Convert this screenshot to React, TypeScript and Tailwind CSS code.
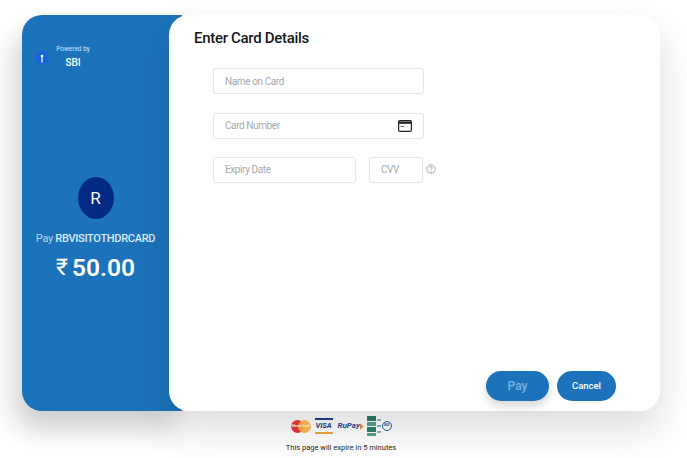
import React from 'react';

const font = 'font-[Roboto,"Noto_Sans",sans-serif]';

const inputClass =
  'h-[26px] rounded-[3px] border border-[#e3e6ea] bg-white px-[11px] text-[10px] tracking-[-0.4px] text-[#8a8f94] placeholder:text-[#a6a9ad] outline-none shadow-[0_0_2px_rgba(0,0,0,0.05)]';

const SbiLogo = () => (
  <svg width="14" height="14" viewBox="0 0 14 14">
    <circle cx="7" cy="7" r="7" fill="#1565d8" />
    <circle cx="7" cy="5" r="1.3" fill="#fff" />
    <rect x="6.4" y="5" width="1.2" height="6.5" fill="#fff" />
  </svg>
);

const CardIcon = () => (
  <svg width="14" height="12" viewBox="0 0 14 12" fill="none">
    <rect x="0.6" y="0.6" width="12.8" height="10.8" rx="1.2" stroke="#222" strokeWidth="1.2" />
    <rect x="0.6" y="1.5" width="12.8" height="2.3" fill="#222" />
    <rect x="2.5" y="6" width="3.5" height="0.9" fill="#555" />
  </svg>
);

const HelpIcon = () => (
  <svg width="10" height="10" viewBox="0 0 10 10" fill="none">
    <circle cx="5" cy="5" r="4.2" stroke="#8f8f8f" strokeWidth="0.8" />
    <path d="M3.7 3.9c0-.8.6-1.3 1.3-1.3s1.3.5 1.3 1.2c0 1-1.3 1-1.3 2" stroke="#8f8f8f" strokeWidth="0.8" />
    <circle cx="5" cy="7.3" r="0.5" fill="#8f8f8f" />
  </svg>
);

const MasterCard = () => (
  <div className="relative h-[15px] w-[20px]">
    <div className="absolute left-0 top-0 h-[13px] w-[13px] translate-y-[1px] rounded-full bg-[#d9313b]" />
    <div className="absolute right-0 top-0 h-[13px] w-[13px] translate-y-[1px] rounded-full bg-[#eba93a] opacity-90" />
    <span className="absolute inset-0 text-center text-[3.5px] font-bold italic leading-[15px] text-[#fbe9d8]">MasterCard</span>
  </div>
);

const Visa = () => (
  <div className="flex h-[16px] w-[18px] flex-col justify-between">
    <div className="h-[2px] bg-[#1b3f8f]" />
    <span className="text-center text-[7.5px] font-bold italic leading-none text-[#1b3f8f]">VISA</span>
    <div className="h-[2px] bg-[#eba93a]" />
  </div>
);

const RuPay = () => (
  <div className="flex w-[26px] items-center">
    <span className="text-[8px] font-bold italic leading-none text-[#2a4a97]">RuPay</span>
    <svg width="4" height="7" viewBox="0 0 4 7">
      <path d="M0 0l4 3.5-4 3.5z" fill="#e8943a" />
    </svg>
  </div>
);

const CertBadges = () => (
  <div className="flex w-[25px] items-center gap-[1px]">
    <div className="flex w-[9px] flex-col gap-[1px]">
      <div className="h-[5px] bg-[#2f7d6b]" />
      <div className="h-[4px] bg-[#5aa08c]" />
      <div className="h-[5px] bg-[#2f7d6b]" />
      <div className="h-[3px] bg-[#5aa08c]" />
    </div>
    <div className="flex w-[4px] flex-col gap-[4px]">
      <div className="h-[2px] bg-[#8fb5ab]" />
      <div className="h-[2px] bg-[#8fb5ab]" />
      <div className="h-[2px] bg-[#8fb5ab]" />
    </div>
    <div className="flex h-[10px] w-[10px] items-center justify-center rounded-full border border-[#2a5fa8] text-[3.5px] font-bold text-[#2a4a97]">ISO</div>
  </div>
);

export default function App() {
  return (
    <div className={`h-[458px] w-[687px] overflow-hidden bg-white ${font}`}>
      <div className="flex pl-[22px] pt-[15px]">
        {/* Merchant panel */}
        <div className="flex h-[396px] w-[160px] flex-col rounded-l-[20px] bg-[#1c73bb] pl-[13px] pr-[26px] pt-[29px] text-white shadow-[-6px_18px_28px_rgba(0,0,0,0.2)]">
          <div className="flex items-center">
            <div className="mt-[2px]">
              <SbiLogo />
            </div>
            <div className="ml-[7px] flex w-[34px] flex-col items-center">
              <span className="whitespace-nowrap text-[6.5px] leading-[10px] text-[#cfe3f5]">Powered by</span>
              <span className="mt-[3px] text-[10px] font-medium leading-[12px]">SBI</span>
            </div>
          </div>
          <div className="-ml-[13px] -mr-[26px] mt-[108px] flex w-[147px] flex-col items-center">
            <div className="flex h-[42px] w-[36px] items-center justify-center rounded-[50%] bg-[#032a85] text-[17px] leading-none">R</div>
            <div className="mt-[12px] whitespace-nowrap text-[11px] leading-[15px] tracking-[-0.3px] text-[#bcd8ef]">
              Pay <span className="font-medium text-[#dcebf8]">RBVISITOTHDRCARD</span>
            </div>
            <div className="mt-[7px] flex items-center gap-[4px] leading-[30px]">
              <span className="text-[23px] font-normal">₹</span>
              <span className="text-[24.5px] font-semibold">50.00</span>
            </div>
          </div>
        </div>

        {/* Card form */}
        <div className="relative -ml-[13px] flex h-[396px] w-[491px] flex-col rounded-[20px] bg-white pl-[25px] pt-[13px] shadow-[0_18px_40px_rgba(0,0,0,0.14)]">
          <h1 className="text-[15px] font-medium leading-[20px] tracking-[-0.3px] text-[#16181b]">Enter Card Details</h1>
          <div className="ml-[19px] mt-[20px] flex flex-col">
            <input className={`${inputClass} w-[211px]`} placeholder="Name on Card" readOnly />
            <div className="relative mt-[18px] w-[211px]">
              <input className={`${inputClass} w-full`} placeholder="Card Number" readOnly />
              <div className="absolute right-[12px] top-[8px]">
                <CardIcon />
              </div>
            </div>
            <div className="mt-[18px] flex items-start">
              <input className={`${inputClass} w-[143px]`} placeholder="Expiry Date" readOnly />
              <input className={`${inputClass} ml-[13px] w-[54px]`} placeholder="CVV" readOnly />
              <div className="ml-[3px] mt-[7px]">
                <HelpIcon />
              </div>
            </div>
          </div>
          <div className="ml-[292px] mt-auto mb-[10px] flex gap-[8px]">
            <button className="h-[30px] w-[63px] rounded-full bg-[#1c73bb] text-[12px] font-medium text-[#7fb2de] shadow-[0_5px_10px_rgba(0,0,0,0.16)]">Pay</button>
            <button className="h-[30px] w-[59px] rounded-full bg-[#1c73bb] text-[9.5px] font-medium text-white">Cancel</button>
          </div>
        </div>
      </div>

      {/* Footer */}
      <div className="flex flex-col items-center pr-[5px]">
        <div className="mt-[6px] flex h-[18px] items-center">
          <MasterCard />
          <div className="ml-[4px]"><Visa /></div>
          <div className="ml-[5px]"><RuPay /></div>
          <div className="ml-[3px]"><CertBadges /></div>
        </div>
        <div className="mt-[7px] text-[7.5px] leading-[11px] text-[#26292c]">This page will expire in 5 minutes</div>
      </div>
    </div>
  );
}
